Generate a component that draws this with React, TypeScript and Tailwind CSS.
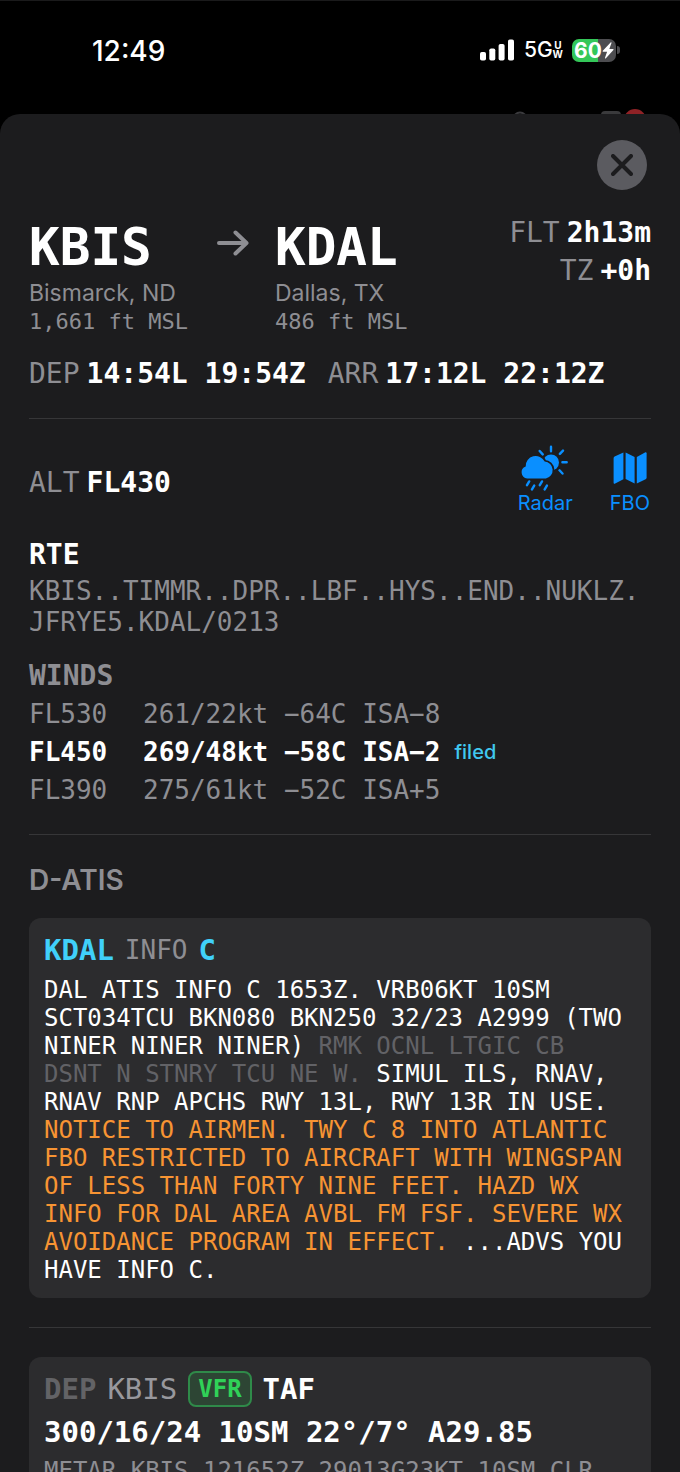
import type { ReactNode } from "react";

type Airport = {
  code: string;
  city: string;
  elevation: string;
};

type Wind = {
  level: string;
  text: string;
  filed?: boolean;
};

const departure: Airport = {
  code: "KBIS",
  city: "Bismarck, ND",
  elevation: "1,661 ft MSL",
};

const arrival: Airport = {
  code: "KDAL",
  city: "Dallas, TX",
  elevation: "486 ft MSL",
};

const winds: Wind[] = [
  { level: "FL530", text: "261/22kt −64C ISA−8" },
  { level: "FL450", text: "269/48kt −58C ISA−2", filed: true },
  { level: "FL390", text: "275/61kt −52C ISA+5" },
];

function StatusBar() {
  return (
    <header className="relative flex h-[114px] shrink-0 items-start justify-between overflow-hidden border-t border-[#1a1a1b] pt-8 pr-[60px] pl-[92px]">
      <span className="text-[28px] leading-9 font-medium">12:49</span>
      <div className="flex h-[34px] items-center">
        <svg width="34" height="22" viewBox="0 0 34 22" fill="#fff">
          <rect x="0" y="13" width="6" height="8.5" rx="1.8" />
          <rect x="9.3" y="9.5" width="6" height="12" rx="1.8" />
          <rect x="18.6" y="5" width="6" height="16.5" rx="1.8" />
          <rect x="28" y="0.5" width="6" height="21" rx="1.8" />
        </svg>
        <span className="ml-[10px] text-[21px] leading-6 font-medium">5G</span>
        <span className="flex flex-col items-center text-[10px] leading-[9px] font-bold">
          <span>U</span>
          <span>W</span>
        </span>
        <div className="ml-[9px] flex items-center gap-px">
          <div className="flex h-[23px] w-11 items-center justify-center rounded-[7px] bg-linear-to-r from-[#34c759] from-60% to-[#4d4d50] to-60%">
            <span className="text-[21px] leading-[23px] font-bold">60</span>
            <svg width="12" height="17" viewBox="0 0 12 17" fill="#fff">
              <path d="M8.6 0.4 0.8 8.7c-.4.5-.2 1 .4 1h3.9L3 15.7c-.2.8.4 1.1.9.6l7.5-8.2c.4-.5.2-1-.4-1H7.3L9.5.9c.2-.7-.4-1-.9-.5Z" />
            </svg>
          </div>
          <span className="h-2 w-[3px] rounded-r-full bg-[#4d4d50]" />
        </div>
      </div>
      {/* toolbar of the screen under the sheet */}
      <svg
        className="absolute right-[30px] bottom-0"
        width="140"
        height="5"
        viewBox="0 0 140 5"
      >
        <circle cx="10" cy="10" r="6.5" fill="none" stroke="#3a3a3d" strokeWidth="2" />
        <rect x="91" y="2" width="20" height="12" rx="4" fill="#3a3a3c" />
        <circle cx="125" cy="11" r="11" fill="#8f2226" />
      </svg>
    </header>
  );
}

function AirportBlock({ code, city, elevation }: Airport) {
  return (
    <div className="pt-2">
      <h1 className="font-['DejaVu_Sans_Mono',monospace] text-[51px] leading-[52px] font-bold">
        {code}
      </h1>
      <p className="mt-1 text-[23px] leading-[30px] text-[#8e8e93]">{city}</p>
      <p className="font-['DejaVu_Sans_Mono',monospace] text-[22px] leading-7 text-[#8e8e93]">
        {elevation}
      </p>
    </div>
  );
}

function Stat({ label, children }: { label: string; children: ReactNode }) {
  return (
    <p className="flex gap-[7px] font-['DejaVu_Sans_Mono',monospace] text-[28px] leading-[38px] whitespace-pre">
      <span className="text-[#8e8e93]">{label}</span>
      <span className="font-bold">{children}</span>
    </p>
  );
}

function RadarIcon() {
  return (
    <svg width="48" height="46" viewBox="0 0 48 46">
      <circle cx="30" cy="17.5" r="8" fill="#0a8fff" />
      <path
        d="M30 1.7v4.6M18.7 6l3 3.4M38.9 8.9l3.1-3.3M41.4 17.3h4.3M38.5 25.3l3 3.2M6 40.2l2.2-3.8M11 44.4l2.2-3.8M18.8 40.2l2.2-3.8M23.7 44.4l2.2-3.8"
        stroke="#0a8fff"
        strokeWidth="2.4"
        strokeLinecap="round"
      />
      <path
        d="M6.2 33.4a6.2 6.2 0 0 1-1.5-12 10 10 0 0 1 19-4.8 8.5 8.5 0 0 1 1.2 16.8Z"
        fill="#0a8fff"
        stroke="#1c1c1e"
        strokeWidth="3.4"
        paintOrder="stroke"
      />
    </svg>
  );
}

function MapIcon() {
  return (
    <svg width="34" height="46" viewBox="0 0 34 46" fill="#0a8fff">
      <path d="M10.4 7.4v26.8L2.2 38.6c-.9.5-1.6.1-1.6-.9V13.2c0-.8.3-1.4 1-1.8Z" />
      <path d="M12.6 7.4 21.6 12v26.6l-9-4.5Z" />
      <path d="M23.8 12v26.6l8.8-4.4c.7-.4 1-.9 1-1.7V8.3c0-1-.7-1.4-1.6-.9Z" />
    </svg>
  );
}

function Divider() {
  return <hr className="border-[#363638]" />;
}

export default function App() {
  return (
    <div className="flex h-screen flex-col overflow-hidden bg-black font-['Inter',sans-serif] text-white">
      <StatusBar />

      <main className="min-h-0 flex-1 overflow-hidden rounded-t-[20px] bg-[#1c1c1e] px-[29px] pt-[26px]">
        <div className="flex justify-end pr-1">
          <button
            type="button"
            aria-label="Close"
            className="flex size-[50px] items-center justify-center rounded-full bg-[#5b5b60]"
          >
            <svg width="22" height="22" viewBox="0 0 22 22">
              <path
                d="M2 2l18 18M20 2 2 20"
                stroke="#1c1c1e"
                strokeWidth="4"
                strokeLinecap="round"
              />
            </svg>
          </button>
        </div>

        <section className="mt-6 flex items-start">
          <AirportBlock {...departure} />
          <svg
            className="mr-[26px] ml-[29px] mt-4 shrink-0"
            width="32"
            height="26"
            viewBox="0 0 32 26"
          >
            <path
              d="M2 13h27M18.5 2.5 29.5 13l-11 10.5"
              fill="none"
              stroke="#8e8e93"
              strokeWidth="4"
              strokeLinecap="round"
              strokeLinejoin="round"
            />
          </svg>
          <AirportBlock {...arrival} />
          <div className="ml-auto flex flex-col items-end">
            <Stat label="FLT">2h13m</Stat>
            <Stat label="TZ">+0h</Stat>
          </div>
        </section>

        <section className="mt-[19px] mb-[25px] flex gap-[22px]">
          <Stat label="DEP">14:54L 19:54Z</Stat>
          <Stat label="ARR">17:12L 22:12Z</Stat>
        </section>

        <Divider />

        <section className="mt-[26px] flex items-end justify-between">
          <div className="pb-[13px]">
            <Stat label="ALT">FL430</Stat>
          </div>
          <div className="flex gap-[37px] pr-px text-[20px] leading-6 text-[#0a8fff]">
            <button type="button" className="flex flex-col items-center">
              <RadarIcon />
              Radar
            </button>
            <button type="button" className="flex flex-col items-center">
              <MapIcon />
              FBO
            </button>
          </div>
        </section>

        <section className="mt-6 font-['DejaVu_Sans_Mono',monospace]">
          <h2 className="text-[28px] leading-8 font-bold">RTE</h2>
          <p className="mt-[5px] text-[26px] leading-[31px] break-all text-[#8e8e93]">
            KBIS..TIMMR..DPR..LBF..HYS..END..NUKLZ.
            <wbr />
            JFRYE5.KDAL/0213
          </p>
        </section>

        <section className="mt-5 mb-[25px] font-['DejaVu_Sans_Mono',monospace]">
          <h2 className="text-[28px] leading-9 font-bold text-[#8e8e93]">
            WINDS
          </h2>
          <ul className="mt-px text-[26px] leading-[38px]">
            {winds.map((wind) => (
              <li
                key={wind.level}
                className={
                  wind.filed
                    ? "flex items-center font-bold"
                    : "flex items-center text-[#8e8e93]"
                }
              >
                <span className="w-[114px]">{wind.level}</span>
                <span>{wind.text}</span>
                {wind.filed && (
                  <span className="ml-[14px] font-['Inter',sans-serif] text-[20px] leading-6 font-medium text-[#40c8f0]">
                    filed
                  </span>
                )}
              </li>
            ))}
          </ul>
        </section>

        <Divider />

        <h2 className="mt-[26px] mb-[19px] text-[28px] leading-[38px] font-semibold text-[#8e8e93]">
          D-ATIS
        </h2>

        <section className="mb-[29px] rounded-xl bg-[#2c2c2e] px-[15px] pt-[14px] pb-[14px] font-['DejaVu_Sans_Mono',monospace]">
          <h3 className="flex items-center gap-[11px] text-[29px] leading-9 font-bold text-[#40d0fa]">
            KDAL
            <span className="text-[26px] font-normal text-[#8e8e93]">INFO</span>
            C
          </h3>
          <p className="mt-2 pr-2 text-[24px] leading-7">
            DAL ATIS INFO C 1653Z. VRB06KT 10SM SCT034TCU BKN080 BKN250 32/23
            A2999 (TWO NINER NINER NINER){" "}
            <span className="text-[#626266]">
              RMK OCNL LTGIC CB DSNT N STNRY TCU NE W.
            </span>{" "}
            SIMUL ILS, RNAV, RNAV RNP APCHS RWY 13L, RWY 13R IN USE.{" "}
            <span className="text-[#f79433]">
              NOTICE TO AIRMEN. TWY C 8 INTO ATLANTIC FBO RESTRICTED TO AIRCRAFT
              WITH WINGSPAN OF LESS THAN FORTY NINE FEET. HAZD WX INFO FOR DAL
              AREA AVBL FM FSF. SEVERE WX AVOIDANCE PROGRAM IN EFFECT.
            </span>{" "}
            ...ADVS YOU HAVE INFO C.
          </p>
        </section>

        <Divider />

        <section className="mt-[29px] rounded-xl bg-[#2c2c2e] px-[15px] pt-[14px] pb-4 font-['DejaVu_Sans_Mono',monospace]">
          <h3 className="flex items-center gap-[11px] text-[29px] leading-9 font-bold">
            <span className="text-[#636366]">DEP</span>
            <span className="font-normal text-[#98989d]">KBIS</span>
            <span className="rounded-lg border-2 border-[#2f8a49] bg-[#2d4534] px-2 text-[24px] leading-8 text-[#30d158]">
              VFR
            </span>
            TAF
          </h3>
          <p className="mt-[5px] text-[29px] leading-10 font-bold">
            300/16/24 10SM 22°/7° A29.85
          </p>
          <p className="mt-[5px] text-[24px] leading-7 text-[#8e8e93]">
            METAR KBIS 121652Z 29013G23KT 10SM CLR
          </p>
        </section>
      </main>
    </div>
  );
}
